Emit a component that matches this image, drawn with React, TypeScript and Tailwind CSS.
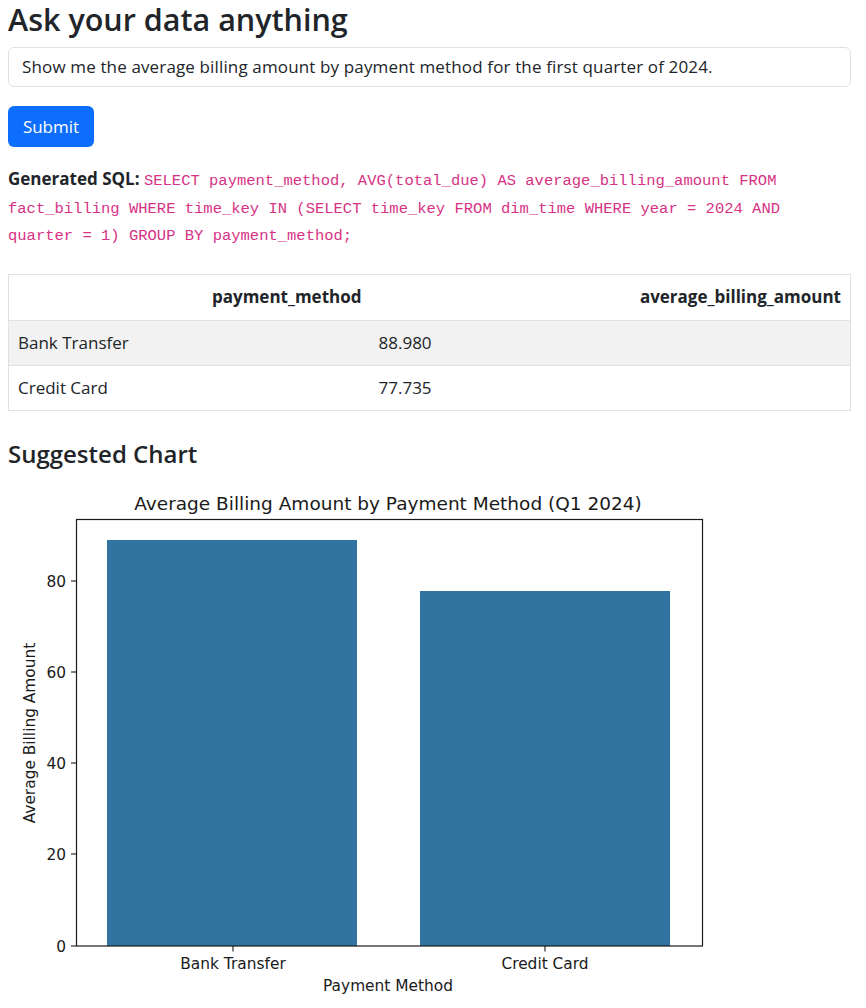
const rows = [
  { method: 'Bank Transfer', avg: '88.980' },
  { method: 'Credit Card', avg: '77.735' },
]

const yTicks = [
  { label: '80', y: 101 },
  { label: '60', y: 192 },
  { label: '40', y: 283 },
  { label: '20', y: 374 },
  { label: '0', y: 466 },
]

function BarChart() {
  const font = "'DejaVu Sans', sans-serif"
  return (
    <svg width="720" height="530" viewBox="0 0 720 530" className="block">
      <text x="380" y="30" textAnchor="middle" fontFamily={font} fontSize="18.5" fill="#1a1a1a">
        Average Billing Amount by Payment Method (Q1 2024)
      </text>
      <rect x="99" y="60" width="250" height="406" fill="#3274a1" />
      <rect x="412" y="111" width="250" height="355" fill="#3274a1" />
      <rect x="68.5" y="39.5" width="626" height="426.5" fill="none" stroke="#1a1a1a" strokeWidth="1.2" />
      {yTicks.map((t) => (
        <g key={t.label}>
          <line x1="63" x2="68" y1={t.y} y2={t.y} stroke="#1a1a1a" strokeWidth="1.1" />
          <text x="58" y={t.y + 5.5} textAnchor="end" fontFamily={font} fontSize="15.4" fill="#1a1a1a">
            {t.label}
          </text>
        </g>
      ))}
      {[
        { label: 'Bank Transfer', x: 225 },
        { label: 'Credit Card', x: 537 },
      ].map((t) => (
        <g key={t.label}>
          <line x1={t.x} x2={t.x} y1="466" y2="471.5" stroke="#1a1a1a" strokeWidth="1.1" />
          <text x={t.x} y="489" textAnchor="middle" fontFamily={font} fontSize="15.4" fill="#1a1a1a">
            {t.label}
          </text>
        </g>
      ))}
      <text x="380" y="511" textAnchor="middle" fontFamily={font} fontSize="15.4" fill="#1a1a1a">
        Payment Method
      </text>
      <text
        x="0"
        y="0"
        transform="translate(27 253) rotate(-90)"
        textAnchor="middle"
        fontFamily={font}
        fontSize="15.4"
        fill="#1a1a1a"
      >
        Average Billing Amount
      </text>
    </svg>
  )
}

export default function App() {
  return (
    <div className="min-h-screen bg-white font-['Open_Sans',sans-serif] text-[#212529]">
      <div className="ml-2 w-[843px]">
        <h1 className="h-[39px] text-[30.5px] leading-[39px] font-semibold">Ask your data anything</h1>

        <div className="mt-2 flex h-[40px] items-center rounded-md border border-[#dee2e6] px-[13px] text-[17px] tracking-[0.14px]">
          Show me the average billing amount by payment method for the first quarter of 2024.
        </div>

        <button className="mt-[19px] flex h-[41px] w-[86px] items-center justify-center rounded-md bg-[#0d6efd] text-[17px] text-white">
          Submit
        </button>

        <p className="mt-[18px] text-[17px] leading-[27.5px]">
          <span className="font-bold">Generated SQL:</span>{' '}
          <code className="font-['Liberation_Mono',monospace] text-[15.5px] leading-[18px] text-[#d63384]">
            SELECT payment_method, AVG(total_due) AS average_billing_amount FROM fact_billing WHERE time_key IN
            (SELECT time_key FROM dim_time WHERE year = 2024 AND quarter = 1) GROUP BY payment_method;
          </code>
        </p>

        <table className="mt-[26px] w-full border-collapse border border-[#dee2e6] text-[17px]">
          <thead>
            <tr className="h-[46px]">
              <th className="w-[361px] border-b border-[#dee2e6] px-2 text-right font-bold">payment_method</th>
              <th className="border-b border-[#dee2e6] px-[9px] text-right font-bold">average_billing_amount</th>
            </tr>
          </thead>
          <tbody>
            {rows.map((r, i) => (
              <tr key={r.method} className={`h-[45px] ${i % 2 === 0 ? 'bg-[#f2f2f2]' : 'bg-white'}`}>
                <td className="border-b border-[#dee2e6] px-[9px]">{r.method}</td>
                <td className="border-b border-[#dee2e6] px-[9px]">{r.avg}</td>
              </tr>
            ))}
          </tbody>
        </table>

        <h3 className="mt-[27px] text-[24px] leading-[32px] font-semibold">Suggested Chart</h3>

        <div className="mt-[10px]">
          <BarChart />
        </div>
      </div>
    </div>
  )
}
